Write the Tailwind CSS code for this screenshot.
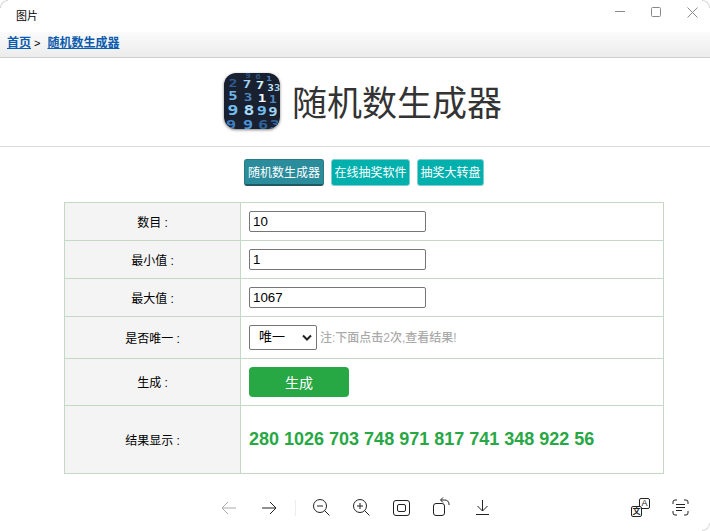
<!DOCTYPE html>
<html lang="zh-CN">
  <head>
    <meta charset="UTF-8" />
    <title>随机数生成器</title>
    <script src="https://cdn.jsdelivr.net/npm/@tailwindcss/browser@4"></script>
  </head>
  <body class="relative bg-white w-[710px] h-[531px] overflow-hidden flex flex-col font-['Liberation_Sans','Noto_Sans_CJK_SC',sans-serif] text-[12px] text-black">
    <!-- Window corners -->
    <div class="absolute left-0 top-0 w-[8px] h-[8px] border-l border-t border-[#d8d8d8] rounded-tl-[8px]"></div>
    <div class="absolute right-0 top-0 w-[8px] h-[8px] border-r border-t border-[#d8d8d8] rounded-tr-[8px]"></div>
    <div class="absolute right-0 bottom-0 w-[8px] h-[8px] border-r border-b border-[#d8d8d8] rounded-br-[8px]"></div>

    <!-- Window title bar -->
    <div class="h-[32px] shrink-0 flex items-center justify-between">
      <span class="ml-[16px] text-[11px]">图片</span>
      <div class="flex items-center text-[#8a8a8a] pb-[8px]">
        <svg class="w-[10px] h-[10px] mr-[26px]" viewBox="0 0 10 10" fill="none" stroke="currentColor"><path d="M0 4.5h10" /></svg>
        <svg class="w-[10px] h-[10px] mr-[26px]" viewBox="0 0 10 10" fill="none" stroke="currentColor"><rect x="0.5" y="0.5" width="9" height="9" rx="1" /></svg>
        <svg class="w-[11px] h-[11px] mr-[12px]" viewBox="0 0 11 11" fill="none" stroke="currentColor"><path d="M0.5 0.5l10 10M10.5 0.5l-10 10" /></svg>
      </div>
    </div>

    <!-- Breadcrumb -->
    <div class="h-[26px] shrink-0 bg-gradient-to-b from-[#fbfbfb] to-[#ececec] border-b border-[#cfcfcf] flex items-center pl-[7px] pb-[3px]">
      <a class="font-bold text-[#0b5cad] underline" href="#">首页</a>
      <span class="ml-[3px] mr-[7px] text-[11px]">&gt;</span>
      <a class="font-bold text-[#0b5cad] underline" href="#">随机数生成器</a>
    </div>

    <!-- Page heading -->
    <div class="h-[89px] shrink-0 border-b border-[#dcdcdc] flex items-center justify-center gap-[12px] pl-[16px]">
      <div class="w-[56px] h-[56px] -mt-[3px] rounded-[12px] overflow-hidden shadow-[0_1px_3px_rgba(0,0,0,0.5)]">
        <svg viewBox="0 0 56 56" class="w-full h-full" font-family="DejaVu Sans Mono, monospace" font-weight="700" text-anchor="middle">
          <rect width="56" height="56" fill="#19202f" />
          <g transform="scale(1.3 1)">
            <text x="18.5" y="5" font-size="7" fill="#2f5580">9</text>
            <text x="26.2" y="6" font-size="7" fill="#2f5580">6</text>
            <text x="34.6" y="8" font-size="7" fill="#4f86c0">1</text>
            <text x="6.9" y="14" font-size="11" fill="#2f5c94">2</text>
            <text x="17.7" y="15" font-size="11" fill="#9fd0f2">7</text>
            <text x="27.7" y="16" font-size="11" fill="#d4eefc">7</text>
            <text x="35.8" y="18" font-size="8" fill="#cfeafa">3</text>
            <text x="40.8" y="18" font-size="8" fill="#9fd0f2">3</text>
            <text x="6.9" y="27" font-size="12" fill="#6fb6e8">5</text>
            <text x="18.5" y="28" font-size="11" fill="#4f86c0">3</text>
            <text x="29.2" y="29" font-size="11" fill="#f2fbff">1</text>
            <text x="37.7" y="30" font-size="10" fill="#4f86c0">1</text>
            <text x="6.9" y="42" font-size="14" fill="#72bdf0">9</text>
            <text x="19.2" y="42" font-size="14" fill="#a8dcf8">8</text>
            <text x="29.2" y="42" font-size="13" fill="#72bdf0">9</text>
            <text x="37.7" y="43" font-size="12" fill="#9fd4f4">9</text>
            <text x="5.4" y="56" font-size="13" fill="#3e7fc0">9</text>
            <text x="18.5" y="56" font-size="13" fill="#4f95d8">9</text>
            <text x="30" y="56" font-size="13" fill="#2f6298">6</text>
            <text x="39.2" y="56" font-size="13" fill="#2f6298">3</text>
          </g>
        </svg>
      </div>
      <h1 class="text-[35px] leading-none font-normal text-[#333] pt-[2px]">随机数生成器</h1>
    </div>

    <!-- Tabs -->
    <div class="shrink-0 flex justify-center gap-[7px] mt-[12px] pl-[18px]">
      <a class="w-[80px] h-[27px] pt-[1px] flex items-center justify-center rounded-[3px] bg-[#2b8c9c] border border-[#2b7a88] border-b-2 border-b-[#1e5a64] text-white text-[12px]">随机数生成器</a>
      <a class="w-[79px] h-[27px] pt-[1px] flex items-center justify-center rounded-[3px] bg-[#00b0ad] border border-[#7fcdd0] text-white text-[12px]">在线抽奖软件</a>
      <a class="w-[67px] h-[27px] pt-[1px] flex items-center justify-center rounded-[3px] bg-[#00b0ad] border border-[#7fcdd0] text-white text-[12px]">抽奖大转盘</a>
    </div>

    <!-- Form table -->
    <table class="w-[600px] ml-[64px] mt-[16px] shrink-0 border-collapse table-fixed">
      <tbody>
        <tr class="h-[38px]">
          <td class="w-[176px] border border-[#c4d8c4] bg-[#f4f4f4] text-center pt-[2px]">数目 :</td>
          <td class="border border-[#c4d8c4] pl-[8px]">
            <input class="block w-[177px] h-[21px] border border-[#767676] rounded-[2px] px-[3px] text-[13.3px] text-black" value="10" />
          </td>
        </tr>
        <tr class="h-[38px]">
          <td class="border border-[#c4d8c4] bg-[#f4f4f4] text-center pt-[2px]">最小值 :</td>
          <td class="border border-[#c4d8c4] pl-[8px]">
            <input class="block w-[177px] h-[21px] border border-[#767676] rounded-[2px] px-[3px] text-[13.3px] text-black" value="1" />
          </td>
        </tr>
        <tr class="h-[38px]">
          <td class="border border-[#c4d8c4] bg-[#f4f4f4] text-center pt-[2px]">最大值 :</td>
          <td class="border border-[#c4d8c4] pl-[8px]">
            <input class="block w-[177px] h-[21px] border border-[#767676] rounded-[2px] px-[3px] text-[13.3px] text-black" value="1067" />
          </td>
        </tr>
        <tr class="h-[42px]">
          <td class="border border-[#c4d8c4] bg-[#f4f4f4] text-center pt-[2px]">是否唯一 :</td>
          <td class="border border-[#c4d8c4] pl-[8px]">
            <div class="flex items-center gap-[3px]">
              <div class="w-[68px] h-[25px] border border-[#767676] rounded-[2px] flex items-center justify-between pl-[9px] pr-[4px] text-[13px]">
                <span class="-mt-[1px]">唯一</span>
                <svg class="w-[10px] h-[7px]" viewBox="0 0 10 7" fill="none" stroke="#222" stroke-width="2"><path d="M1 1.5l4 4 4-4" /></svg>
              </div>
              <span class="text-[#aaa] font-medium">注:下面点击2次,查看结果!</span>
            </div>
          </td>
        </tr>
        <tr class="h-[47px]">
          <td class="border border-[#c4d8c4] bg-[#f4f4f4] text-center pt-[2px]">生成 :</td>
          <td class="border border-[#c4d8c4] pl-[8px]">
            <button class="block w-[100px] h-[30px] pt-[2px] rounded-[4px] bg-[#28a745] text-white text-[14px]">生成</button>
          </td>
        </tr>
        <tr class="h-[68px]">
          <td class="border border-[#c4d8c4] bg-[#f4f4f4] text-center pt-[2px]">结果显示 :</td>
          <td class="border border-[#c4d8c4] pl-[8px] text-[18px] font-bold text-[#28a745]">280 1026 703 748 971 817 741 348 922 56</td>
        </tr>
      </tbody>
    </table>

    <!-- Viewer toolbar -->
    <div class="relative flex-1 text-[#222]">
      <div class="absolute left-[221px] top-[25px] flex items-center">
        <svg class="w-[15px] h-[14px] text-[#aaa]" viewBox="0 0 15 14" fill="none" stroke="currentColor"><path d="M15 7H1M7 1L1 7l6 6" /></svg>
        <svg class="w-[15px] h-[14px] ml-[26px]" viewBox="0 0 15 14" fill="none" stroke="currentColor"><path d="M0 7h14M8 1l6 6-6 6" /></svg>
        <div class="w-px h-[16px] bg-[#eee] ml-[18px]"></div>
        <svg class="w-[17px] h-[17px] ml-[17px]" viewBox="0 0 17 17" fill="none" stroke="currentColor"><circle cx="7" cy="7" r="6.5" /><path d="M11.5 11.5L16.5 16.5M4 7h6" /></svg>
        <svg class="w-[17px] h-[17px] ml-[23px]" viewBox="0 0 17 17" fill="none" stroke="currentColor"><circle cx="7" cy="7" r="6.5" /><path d="M11.5 11.5L16.5 16.5M4 7h6M7 4v6" /></svg>
        <svg class="w-[17px] h-[16px] ml-[23px]" viewBox="0 0 17 16" fill="none" stroke="currentColor"><rect x="0.5" y="0.5" width="16" height="15" rx="2.5" /><rect x="4.5" y="4.5" width="8" height="7" rx="1.5" /></svg>
        <svg class="w-[17px] h-[19px] ml-[23px] -mt-[3px]" viewBox="0 0 17 19" fill="none" stroke="currentColor"><rect x="0.5" y="6.5" width="11" height="12" rx="2.5" /><path d="M8 3h3.5a4 4 0 0 1 4.5 4v1M10 0.5L7.5 3 10 5.5" /></svg>
        <svg class="w-[13px] h-[15px] ml-[26px]" viewBox="0 0 13 15" fill="none" stroke="currentColor"><path d="M6.5 0v11M1.5 6l5 5 5-5M0 14.5h13" /></svg>
      </div>
      <div class="absolute left-[631px] top-[24px] w-[19px] h-[19px]">
        <div class="absolute right-0 top-0 w-[11px] h-[11px] border border-[#222] rounded-[2px] flex items-center justify-center text-[9px] leading-none">A</div>
        <div class="absolute left-0 bottom-0 w-[11px] h-[11px] border border-[#222] rounded-[2px] bg-white flex items-center justify-center text-[8px] leading-none font-bold">文</div>
      </div>
      <svg class="absolute left-[672px] top-[25px] w-[17px] h-[17px]" viewBox="0 0 17 17" fill="none" stroke="currentColor"><path d="M1 5V3a2 2 0 0 1 2-2h2M12 1h2a2 2 0 0 1 2 2v2M16 12v2a2 2 0 0 1-2 2h-2M5 16H3a2 2 0 0 1-2-2v-2M4 5.5h9M4 8.5h9M4 11.5h6" /></svg>
    </div>
  </body>
</html>
